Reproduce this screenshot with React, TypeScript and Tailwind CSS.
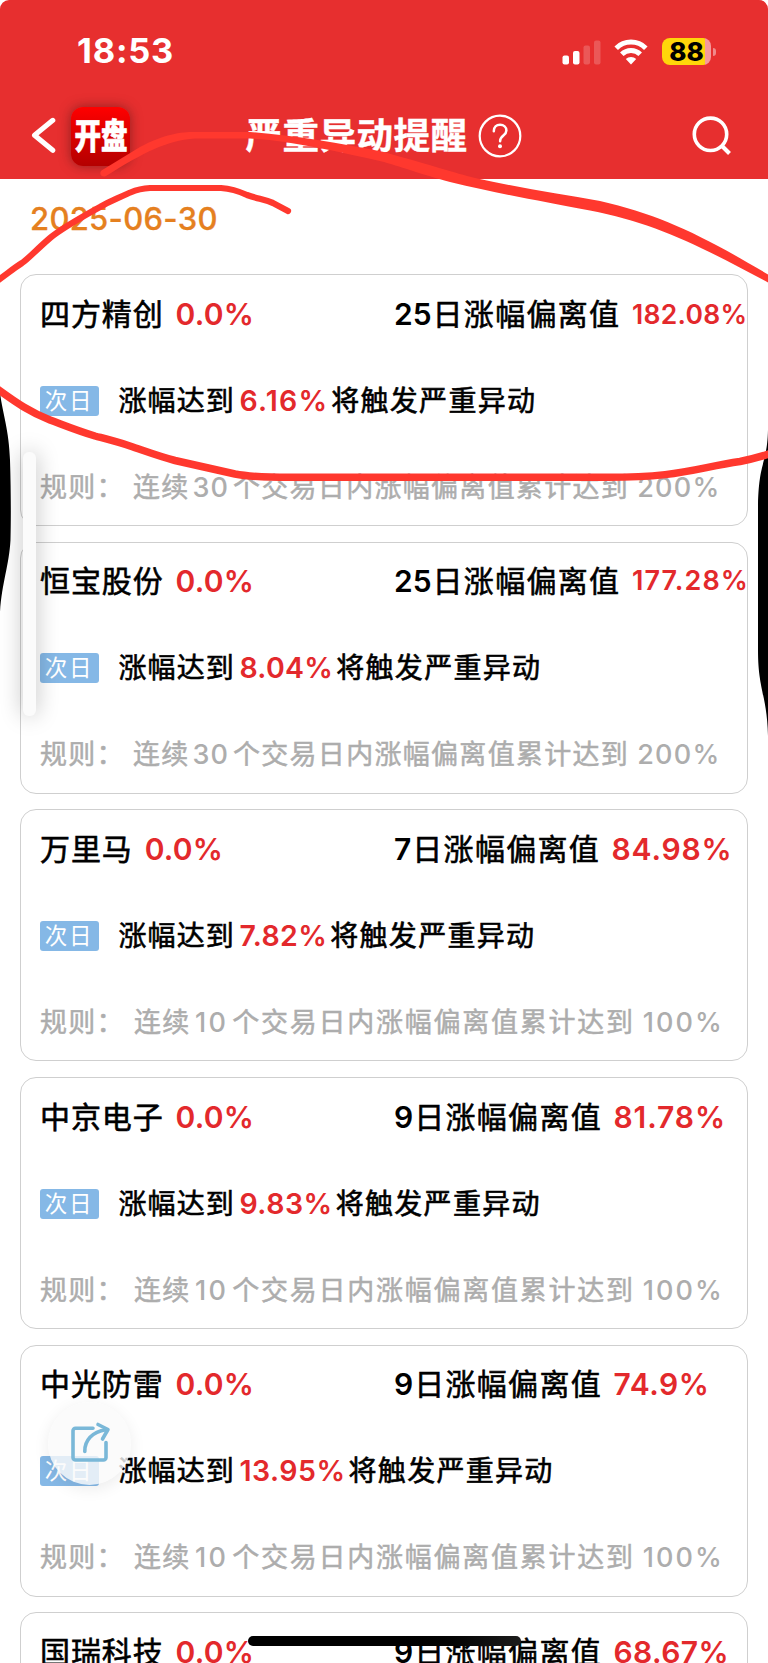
import React from 'react'
import clsx from 'clsx'

interface Stock {
  name: string
  change: string
  days: string
  deviation: string
  deviationStyle: string
  trigger: string
  triggerStyle: string
  ruleDays: string
  ruleLimit: string
}

const stocks: Stock[] = [
  {
    name: '四方精创',
    change: '0.0%',
    days: '25',
    deviation: '182.08%',
    deviationStyle: 'text-[26.5px] tracking-[0.3px]',
    trigger: '6.16%',
    triggerStyle: 'tracking-[1.2px]',
    ruleDays: '30',
    ruleLimit: '200%',
  },
  {
    name: '恒宝股份',
    change: '0.0%',
    days: '25',
    deviation: '177.28%',
    deviationStyle: 'text-[27px] tracking-[1.1px]',
    trigger: '8.04%',
    triggerStyle: 'tracking-[0.3px]',
    ruleDays: '30',
    ruleLimit: '200%',
  },
  {
    name: '万里马',
    change: '0.0%',
    days: '7',
    deviation: '84.98%',
    deviationStyle: 'tracking-[0.8px]',
    trigger: '7.82%',
    triggerStyle: 'tracking-[0.4px]',
    ruleDays: '10',
    ruleLimit: '100%',
  },
  {
    name: '中京电子',
    change: '0.0%',
    days: '9',
    deviation: '81.78%',
    deviationStyle: 'tracking-[0.9px]',
    trigger: '9.83%',
    triggerStyle: 'tracking-[0.5px]',
    ruleDays: '10',
    ruleLimit: '100%',
  },
  {
    name: '中光防雷',
    change: '0.0%',
    days: '9',
    deviation: '74.9%',
    deviationStyle: 'tracking-[0.6px]',
    trigger: '13.95%',
    triggerStyle: 'tracking-[0.5px]',
    ruleDays: '10',
    ruleLimit: '100%',
  },
  {
    name: '国瑞科技',
    change: '0.0%',
    days: '9',
    deviation: '68.67%',
    deviationStyle: 'tracking-[0.4px]',
    trigger: '9.12%',
    triggerStyle: 'tracking-[0.5px]',
    ruleDays: '10',
    ruleLimit: '100%',
  },
]

const StatusBar: React.FC = () => (
  <div className="flex h-[103px] items-center justify-between pr-[52px] pl-[77px]">
    <span className="-mt-[1px] text-[34.5px] leading-[36px] font-bold tracking-[0.8px]">18:53</span>
    <div className="flex items-center">
      <svg width="39" height="26" viewBox="0 0 39 26" fill="#fff">
        <rect x="0.5" y="16.5" width="6.5" height="9" rx="2" />
        <rect x="11" y="12" width="6.5" height="13.5" rx="2" />
        <rect x="21.5" y="6.5" width="6.5" height="19" rx="2" opacity="0.2" />
        <rect x="32" y="1.5" width="6.5" height="24" rx="2" opacity="0.2" />
      </svg>
      <svg className="ml-[13px]" width="34" height="26" viewBox="0 0 34 26" fill="none" stroke="#fff" strokeWidth="5">
        <path d="M2.2 9.2a21 21 0 0 1 29.6 0" />
        <path d="M7.8 15.2a13 13 0 0 1 18.4 0" />
        <path d="M17 25.5l-5.2-5.4a7.4 7.4 0 0 1 10.4 0z" fill="#fff" stroke="none" />
      </svg>
      <div className="ml-[14px] flex h-[27px] w-[49px] items-center justify-center rounded-[8px] bg-[linear-gradient(90deg,#ffd60a_43px,#f59a9b_43px)] text-[26px] leading-[27px] font-extrabold text-black">
        88
      </div>
      <div className="ml-[2px] h-[8px] w-[3px] rounded-r-full bg-[#f08a8b]" />
    </div>
  </div>
)

const NavBar: React.FC = () => (
  <div className="flex h-[66px] items-center">
    <svg className="ml-[31px]" width="26" height="38" viewBox="0 0 26 38" fill="none" stroke="#fff" strokeWidth="5" strokeLinecap="round" strokeLinejoin="round">
      <path d="M21.8 3.3L3.5 18.3l18.3 15" />
    </svg>
    <div className="ml-[14px] flex h-[59px] w-[59px] items-center justify-center rounded-[12px] bg-linear-to-b from-[#ff0000] to-[#b40000] shadow-[0_0_12px_rgba(70,20,20,0.55)]">
      <span className="scale-x-[0.76] text-[35px] leading-none font-black whitespace-nowrap [-webkit-text-stroke:0.6px]">
        开盘
      </span>
    </div>
    <h1 className="ml-[115.5px] w-[222px] text-[36.5px] leading-none font-bold tracking-[0.5px] whitespace-nowrap [-webkit-text-stroke:0.4px]">
      严重异动提醒
    </h1>
    <svg className="ml-[10.5px]" width="44" height="44" viewBox="0 0 44 44" fill="none" stroke="#fff" strokeWidth="2.2" strokeLinecap="round">
      <circle cx="22" cy="22" r="20.3" />
      <path d="M15.8 17.2c0-4 2.6-6.4 6.3-6.4 3.6 0 6.3 2.4 6.3 5.8 0 5.2-6.3 4.8-6.3 10.6" strokeWidth="2.5" />
      <circle cx="22" cy="32.3" r="2" fill="#fff" stroke="none" />
    </svg>
    <svg className="ml-[169.5px]" width="40" height="40" viewBox="0 0 40 40" fill="none" stroke="#fff" strokeWidth="3.6">
      <circle cx="18.5" cy="18.3" r="16.2" />
      <path d="M29.5 29.5l8 8" strokeWidth="4" />
    </svg>
  </div>
)

const StockCard: React.FC<{ stock: Stock }> = ({ stock }) => {
  const wide = stock.ruleDays === '10'

  return (
    <div className="h-[252px] shrink-0 rounded-[16px] border border-[#cfcfcf] bg-white px-[19px] whitespace-nowrap">
      <div className="mt-[18.5px] flex h-[40px] items-center text-[30px] leading-[40px]">
        <div className="flex w-[354px] shrink-0 items-center">
          <span className="tracking-[0.9px] [-webkit-text-stroke:0.6px]">{stock.name}</span>
          <span className="ml-[12px] font-semibold tracking-[0.2px] text-[#e3292c]">{stock.change}</span>
        </div>
        <span className="font-semibold">{stock.days}</span>
        <span className="ml-[1px] tracking-[1.3px] [-webkit-text-stroke:0.6px]">日涨幅偏离值</span>
        <span className={clsx('ml-[11.5px] font-semibold text-[#e3292c]', stock.deviationStyle)}>
          {stock.deviation}
        </span>
      </div>
      <div className="mt-[47px] flex h-[40px] items-center text-[28px] leading-[40px]">
        <span className="-ml-[0.5px] flex h-[30px] w-[59px] items-center justify-center rounded-[3px] bg-[#85b8e6] text-[22.5px] leading-[30px] tracking-[1.8px] text-white">
          次日
        </span>
        <span className="ml-[20px] tracking-[1.1px] [-webkit-text-stroke:0.6px]">涨幅达到</span>
        <span className={clsx('ml-[4.5px] text-[28.5px] font-semibold text-[#e3292c]', stock.triggerStyle)}>
          {stock.trigger}
        </span>
        <span className="ml-[3px] tracking-[1.3px] [-webkit-text-stroke:0.6px]">将触发严重异动</span>
      </div>
      <div className="mt-[47px] flex h-[40px] items-center text-[27px] leading-[40px] text-[#adadad]">
        <span className={clsx('tracking-[1.3px] [-webkit-text-stroke:0.5px]', wide ? 'w-[94px]' : 'w-[93px]')}>
          规则：
        </span>
        <span className="tracking-[1.3px] [-webkit-text-stroke:0.5px]">连续</span>
        <span className={clsx('font-medium', wide ? 'ml-[4.5px] tracking-[2.3px]' : 'ml-[3px] tracking-[1px]')}>
          {stock.ruleDays}
        </span>
        <span className={clsx('ml-[4px] [-webkit-text-stroke:0.5px]', wide ? 'tracking-[1.75px]' : 'tracking-[1.3px]')}>
          个交易日内涨幅偏离值累计达到
        </span>
        <span className={clsx('ml-[8px] font-medium', wide ? 'tracking-[2px]' : 'tracking-[1.3px]')}>
          {stock.ruleLimit}
        </span>
      </div>
    </div>
  )
}

// Hand-drawn marker circle and the dark edges at both sides of the screen
const Annotation: React.FC = () => (
  <svg className="pointer-events-none absolute inset-0" width="768" height="1663" viewBox="0 0 768 1663" fill="none">
    <path d="M0 393C3 415 9 430 10 460C11 490 11 520 10.5 540C9 566 2 582 0 612Z" fill="#000" />
    <path d="M768 430C767 465 759 460 758 505V650C758 690 767 695 768 736Z" fill="#000" />
    <path
      d="M101.5 170.5L140 147C165 134 180 132 195 132L250 132C290 135 340 143 384 152C430 165 455 173 475 178C520 188 560 194 600 201C660 215 700 234 768 274.5V282.5C700 246 655 223 590 210.5C540 201 500 194 450 182C420 174 405 168 384 162C340 152 290 140.5 250 138.5L195 138.5C165 141 145 152 106 176C101.5 178 98.5 173.5 101.5 170.5Z"
      fill="#ff382e"
    />
    <path
      d="M288 211L273 203C263 199 258 199 247 195C236 190 228 188.5 221 188H150C138 188.5 134 191 128 193.5C114 200 110 201 100 207C80 218 62 228 50 238C35 251 28 259 22 263C14 268 7 274 -3 281"
      stroke="#ff382e"
      strokeWidth="6.2"
      strokeLinecap="round"
    />
    <path
      d="M-4 388C18 404 30 412 50 420C66 426 78 431 95 436C110 440 118 442 130 446C145 451 158 456 175 460.5L235 474C250 477 275 477.3 290 477.3H600C680 478 695 468 740 461.5C752 459 760 457 772 453"
      stroke="#ff382e"
      strokeWidth="7.5"
    />
  </svg>
)

const App: React.FC = () => {
  return (
    <div className="relative h-[1663px] w-[768px] overflow-hidden bg-white font-['Inter','Noto_Sans_CJK_SC',sans-serif] text-black">
      <header className="h-[179px] rounded-t-[9px] bg-[#e72f2f] text-white">
        <StatusBar />
        <NavBar />
      </header>

      <main>
        <div className="flex h-[95px] items-start pt-[24px] pl-[30px]">
          <span className="text-[31px] leading-[32px] font-medium tracking-[0.3px] text-[#e5801f] [-webkit-text-stroke:0.3px]">
            2025-06-30
          </span>
        </div>
        <div className="flex flex-col gap-[15.7px] px-[20px]">
          {stocks.map((stock) => (
            <StockCard key={stock.name} stock={stock} />
          ))}
        </div>
      </main>

      <div className="absolute top-[452px] left-[22.5px] h-[264px] w-[13.5px] rounded-[6px] bg-[#fbfbfb] shadow-[0_0_22px_rgba(0,0,0,0.28)]" />

      <div className="absolute top-[1402px] left-[48px] flex size-[83px] items-center justify-center rounded-full bg-[#fafafa]/80 shadow-[0_4px_16px_rgba(0,0,0,0.08)]">
        <svg className="-mt-[4px]" width="42" height="42" viewBox="0 0 42 42" fill="none" stroke="#7ab8d8" strokeWidth="3.6" strokeLinecap="round" strokeLinejoin="round">
          <path d="M24 7.2H6.5a2.5 2.5 0 0 0-2.5 2.5V36.5a2.5 2.5 0 0 0 2.5 2.5H34.5a2.5 2.5 0 0 0 2.5-2.5V21.5" />
          <path d="M15.8 30.5C15.5 20 23 10.5 37 8.7" />
          <path d="M29 3.5L39 8.5L33.5 18" />
        </svg>
      </div>

      <Annotation />

      <div className="absolute top-[1636px] left-[248px] h-[10px] w-[273px] rounded-full bg-linear-to-r from-black from-50% to-[#1c1c1c]" />
    </div>
  )
}

export default App
